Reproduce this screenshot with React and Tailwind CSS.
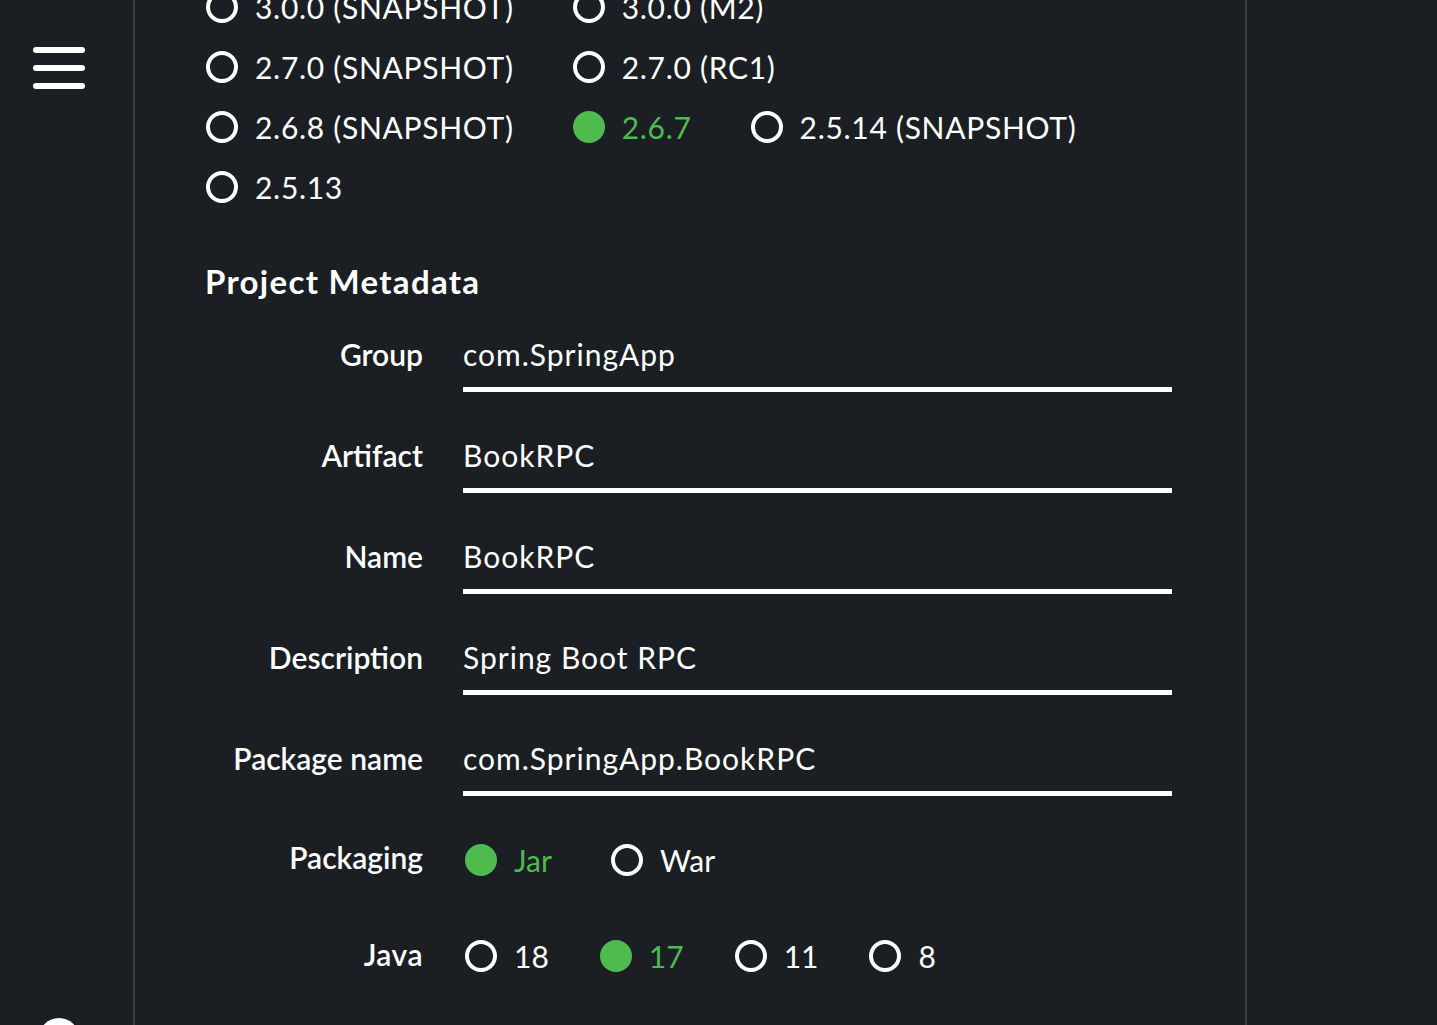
import { useState } from 'react'

const BOOT_ROWS = [
  ['3.0.0 (SNAPSHOT)', '3.0.0 (M2)'],
  ['2.7.0 (SNAPSHOT)', '2.7.0 (RC1)'],
  ['2.6.8 (SNAPSHOT)', '2.6.7', '2.5.14 (SNAPSHOT)'],
  ['2.5.13'],
]

const FIELDS = [
  { label: 'Group', value: 'com.SpringApp' },
  { label: 'Artifact', value: 'BookRPC' },
  { label: 'Name', value: 'BookRPC' },
  { label: 'Description', value: 'Spring Boot RPC' },
  { label: 'Package name', value: 'com.SpringApp.BookRPC' },
]

function Radio({ label, checked, onClick, spacing = 'mr-[59px]' }) {
  return (
    <button
      onClick={onClick}
      className={`flex items-center gap-[17px] ${spacing} bg-transparent cursor-pointer`}
    >
      <span
        className={[
          'w-[32px] h-[32px] rounded-full shrink-0',
          checked ? 'bg-[#4fbb4f]' : 'border-[4px] border-white',
        ].join(' ')}
      />
      <span className={checked ? 'text-[#4fbb4f]' : 'text-white'}>{label}</span>
    </button>
  )
}

export default function App() {
  const [boot, setBoot] = useState('2.6.7')
  const [pack, setPack] = useState('Jar')
  const [java, setJava] = useState('17')

  return (
    <div
      className="h-[1025px] overflow-hidden bg-[#1b1f23] flex text-white text-[30px]"
      style={{ fontFamily: 'Lato, "Liberation Sans", sans-serif' }}
    >
      {/* ── Sidebar ── */}
      <aside className="w-[135px] shrink-0 border-r-2 border-[#383c41] flex flex-col pl-[33px]">
        <button className="mt-[47px] flex flex-col gap-[12px] w-[52px]">
          <span className="h-[6px] w-full rounded-full bg-white" />
          <span className="h-[6px] w-full rounded-full bg-white" />
          <span className="h-[6px] w-full rounded-full bg-white" />
        </button>
        <button className="mt-auto ml-[6px] -mb-[33px] w-[40px] h-[40px] rounded-full bg-white" />
      </aside>

      {/* ── Main column ── */}
      <main className="w-[1112px] shrink-0 border-r-2 border-[#383c41] pl-[71px]">
        <div className="-mt-[23px] flex flex-col tracking-[0.7px]">
          {BOOT_ROWS.map((row, i) => (
            <div key={i} className="h-[60px] flex items-center">
              {row.map((v) => (
                <Radio key={v} label={v} checked={boot === v} onClick={() => setBoot(v)} />
              ))}
            </div>
          ))}
        </div>

        <h2 className="mt-[44px] -ml-[1px] h-[40px] leading-[40px] text-[33px] font-bold tracking-[1.3px]">
          Project Metadata
        </h2>

        <div className="mt-[35px] flex flex-col gap-[45px]">
          {FIELDS.map((f) => (
            <div key={f.label} className="flex items-start gap-[40px]">
              <label className="w-[217px] h-[56px] pb-[20px] flex items-center justify-end font-semibold">
                {f.label}
              </label>
              <input
                readOnly
                value={f.value}
                className="w-[709px] h-[56px] pb-[15px] bg-transparent outline-none border-b-[5px] border-white text-white tracking-[1px]"
              />
            </div>
          ))}
        </div>

        <div className="mt-[34px] h-[60px] flex items-center gap-[40px]">
          <span className="w-[217px] text-right font-semibold -mt-[6px]">Packaging</span>
          <div className="flex items-center ml-[2px]">
            {['Jar', 'War'].map((v) => (
              <Radio key={v} label={v} checked={pack === v} onClick={() => setPack(v)} />
            ))}
          </div>
        </div>

        <div className="mt-[36px] h-[60px] flex items-center gap-[40px]">
          <span className="w-[217px] text-right font-semibold -mt-[4px] tracking-[0.5px]">Java</span>
          <div className="flex items-center ml-[2px]">
            {['18', '17', '11', '8'].map((v) => (
              <Radio
                key={v}
                label={v}
                checked={java === v}
                onClick={() => setJava(v)}
                spacing="mr-[51px]"
              />
            ))}
          </div>
        </div>
      </main>

      <div className="flex-1" />
    </div>
  )
}
